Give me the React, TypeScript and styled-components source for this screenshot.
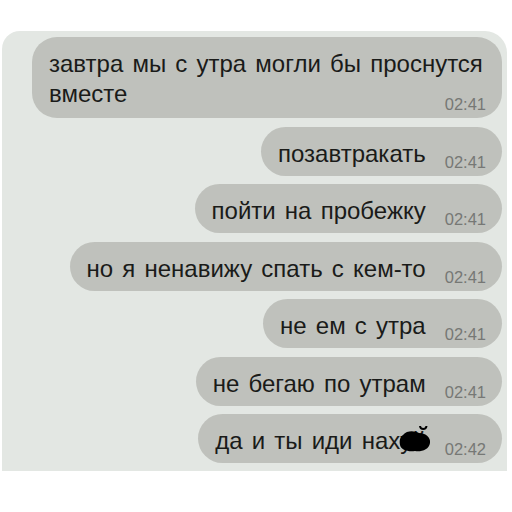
import React from 'react';
import styled, { createGlobalStyle } from 'styled-components';

const GlobalStyle = createGlobalStyle`
  html, body {
    margin: 0;
    padding: 0;
    background: #ffffff;
  }
  body {
    width: 512px;
    height: 512px;
    overflow: hidden;
    font-family: "Liberation Sans", Arial, sans-serif;
  }
`;

const Page = styled.div`
  width: 512px;
  height: 512px;
  padding: 31px 5px 0 2px;
  box-sizing: border-box;
`;

const Panel = styled.div`
  background: #e3e7e3;
  border-radius: 18px 22px 0 0;
  height: 440px;
  box-sizing: border-box;
  padding: 6px 5px 0 0;
  display: flex;
  flex-direction: column;
  align-items: flex-end;
  gap: 8.5px;
`;

const Bubble = styled.div`
  background: #bfc1bc;
  border-radius: 25px;
  display: flex;
  align-items: flex-end;
  gap: 19px;
  padding: 11px 16px 7px 17px;
  box-sizing: border-box;
`;

const MultiBubble = styled.div`
  background: #bfc1bc;
  border-radius: 25px;
  display: flex;
  flex-direction: column;
  padding: 12px 16px 9px 17px;
  box-sizing: border-box;
  width: 470px;
`;

const Line = styled.div`
  display: flex;
  align-items: flex-end;
  justify-content: space-between;
`;

const Text = styled.span<{ $lh?: number }>`
  font-size: 24px;
  line-height: ${(p) => p.$lh ?? 31}px;
  word-spacing: 2.5px;
  color: #1a1b19;
  white-space: nowrap;
`;

const Time = styled.span<{ $drop?: number }>`
  font-size: 16.5px;
  line-height: 16px;
  color: #767875;
  margin-bottom: ${(p) => -(p.$drop ?? 1)}px;
  white-space: nowrap;
  flex-shrink: 0;
`;

const Censor = styled.span`
  position: relative;
  display: inline-block;
`;

const Blob = styled.svg`
  position: absolute;
  left: -2px;
  top: -1px;
  width: 34px;
  height: 30px;
`;

const messages = [
  { text: 'позавтракать', time: '02:41' },
  { text: 'пойти на пробежку', time: '02:41' },
  { text: 'но я ненавижу спать с кем-то', time: '02:41' },
  { text: 'не ем с утра', time: '02:41' },
  { text: 'не бегаю по утрам', time: '02:41' },
];

const App: React.FC = () => (
  <>
    <GlobalStyle />
    <Page>
      <Panel>
        <MultiBubble>
          <Line>
            <Text $lh={30}>завтра мы с утра могли бы проснутся</Text>
          </Line>
          <Line>
            <Text $lh={30}>вместе</Text>
            <Time $drop={3}>02:41</Time>
          </Line>
        </MultiBubble>
        {messages.map((m, i) => (
          <Bubble key={i}>
            <Text>{m.text}</Text>
            <Time>{m.time}</Time>
          </Bubble>
        ))}
        <Bubble>
          <Text>
            да и ты иди нах
            <Censor>
              уй
              <Blob viewBox="0 0 34 30">
                <path
                  d="M5 11 C9 6 17 7 21 9 C27 9 33 13 32 19 C31 26 23 28 17 27 C10 28 3 26 2 21 C1 17 2 13 5 11 Z"
                  fill="#000"
                />
                <path d="M22 2 C22.5 6 28 6 28.5 2" stroke="#000" strokeWidth="2" fill="none" />
              </Blob>
            </Censor>
          </Text>
          <Time>02:42</Time>
        </Bubble>
      </Panel>
    </Page>
  </>
);

export default App;
